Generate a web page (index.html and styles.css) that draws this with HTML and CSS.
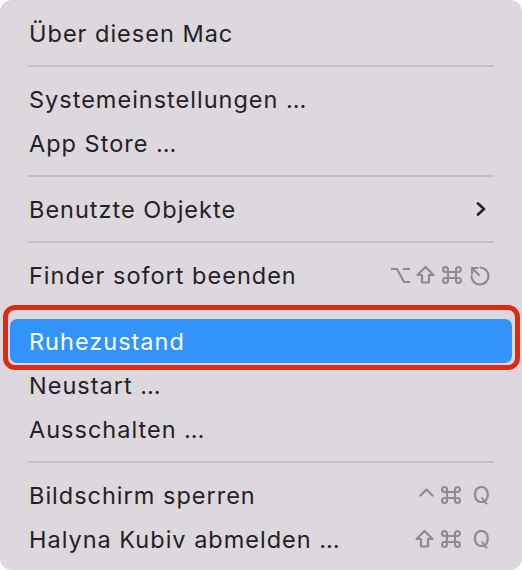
FILE: index.html
```html
<!DOCTYPE html>
<html lang="de">
<head>
<meta charset="utf-8">
<title>Apple-Menü</title>
<link rel="stylesheet" href="styles.css">
</head>
<body>
<div class="menu">
  <div class="item"><span class="label">Über diesen Mac</span></div>
  <div class="sep"></div>
  <div class="item"><span class="label">Systemeinstellungen …</span></div>
  <div class="item"><span class="label">App Store …</span></div>
  <div class="sep"></div>
  <div class="item">
    <span class="label">Benutzte Objekte</span>
    <svg class="chev" width="12" height="14" viewBox="0 0 12 14"><path d="M3 1.5 L9 7 L3 12.5" fill="none" stroke="#262226" stroke-width="2.6" stroke-linecap="round" stroke-linejoin="round"/></svg>
  </div>
  <div class="sep"></div>
  <div class="item">
    <span class="label">Finder sofort beenden</span>
    <span class="keys">
      <svg width="21" height="20" viewBox="0 0 21 20"><path d="M1 4 H7 L14 17 H20 M13 4 H20" fill="none" stroke="#8f8a90" stroke-width="2.2"/></svg>
      <svg width="19" height="20" viewBox="0 0 19 20"><path d="M9.5 2 L17.5 10 H13 V17.5 H6 V10 H1.5 Z" fill="none" stroke="#8f8a90" stroke-width="2.2" stroke-linejoin="round"/></svg>
      <svg width="24" height="20" viewBox="0 0 24 20"><path d="M8 7 V13 M16 7 V13 M8 7 H16 M8 13 H16 M8 7 H5.5 A2.5 2.5 0 1 1 8 4.5 V7 M16 7 V4.5 A2.5 2.5 0 1 1 18.5 7 H16 M8 13 V15.5 A2.5 2.5 0 1 1 5.5 13 H8 M16 13 H18.5 A2.5 2.5 0 1 1 16 15.5 V13" fill="none" stroke="#8f8a90" stroke-width="2.1"/></svg>
      <svg width="21" height="21" viewBox="0 0 21 21"><path d="M11.5 2.5 A8.5 8.5 0 1 1 2.5 11" fill="none" stroke="#8f8a90" stroke-width="2.2" stroke-linecap="round"/><path d="M3 3 L10 10 M3 3 H8.5 M3 3 V8.5" fill="none" stroke="#8f8a90" stroke-width="2.2" stroke-linecap="round" stroke-linejoin="round"/></svg>
    </span>
  </div>
  <div class="sep"></div>
  <div class="item active"><span class="label">Ruhezustand</span></div>
  <div class="item"><span class="label">Neustart …</span></div>
  <div class="item"><span class="label">Ausschalten …</span></div>
  <div class="sep"></div>
  <div class="item">
    <span class="label">Bildschirm sperren</span>
    <span class="keys">
      <svg width="15" height="20" viewBox="0 0 15 20"><path d="M1.5 10.5 L7.5 4.5 L13.5 10.5" fill="none" stroke="#8f8a90" stroke-width="2.2" stroke-linecap="round" stroke-linejoin="round"/></svg>
      <svg width="24" height="20" viewBox="0 0 24 20"><path d="M8 7 V13 M16 7 V13 M8 7 H16 M8 13 H16 M8 7 H5.5 A2.5 2.5 0 1 1 8 4.5 V7 M16 7 V4.5 A2.5 2.5 0 1 1 18.5 7 H16 M8 13 V15.5 A2.5 2.5 0 1 1 5.5 13 H8 M16 13 H18.5 A2.5 2.5 0 1 1 16 15.5 V13" fill="none" stroke="#8f8a90" stroke-width="2.1"/></svg>
      <span class="q">Q</span>
    </span>
  </div>
  <div class="item">
    <span class="label">Halyna Kubiv abmelden …</span>
    <span class="keys">
      <svg width="19" height="20" viewBox="0 0 19 20"><path d="M9.5 2 L17.5 10 H13 V17.5 H6 V10 H1.5 Z" fill="none" stroke="#8f8a90" stroke-width="2.2" stroke-linejoin="round"/></svg>
      <svg width="24" height="20" viewBox="0 0 24 20"><path d="M8 7 V13 M16 7 V13 M8 7 H16 M8 13 H16 M8 7 H5.5 A2.5 2.5 0 1 1 8 4.5 V7 M16 7 V4.5 A2.5 2.5 0 1 1 18.5 7 H16 M8 13 V15.5 A2.5 2.5 0 1 1 5.5 13 H8 M16 13 H18.5 A2.5 2.5 0 1 1 16 15.5 V13" fill="none" stroke="#8f8a90" stroke-width="2.1"/></svg>
      <span class="q">Q</span>
    </span>
  </div>
  <div class="callout"></div>
</div>
</body>
</html>
```
FILE: styles.css
```css
html, body {
  margin: 0;
  padding: 0;
  background: #ffffff;
}
.menu {
  position: relative;
  width: 522px;
  height: 570px;
  box-sizing: border-box;
  padding-top: 11px;
  background: #ddd7de;
  border-radius: 12px;
  font-family: Inter, "Noto Sans", "DejaVu Sans", sans-serif;
  color: #242124;
  overflow: hidden;
}
.item {
  height: 44px;
  margin: 0 10px;
  padding: 0 22px 0 19px;
  display: flex;
  align-items: center;
  justify-content: space-between;
  border-radius: 7px;
  font-size: 23.5px;
  letter-spacing: 1px;
}
.item.active {
  background: #3294fb;
  color: #ffffff;
}
.sep {
  height: 22px;
  margin: 0 28px;
  display: flex;
  align-items: center;
}
.sep::before {
  content: "";
  display: block;
  width: 100%;
  height: 2px;
  background: #c6bfc7;
}
.keys {
  display: flex;
  align-items: center;
  gap: 5px;
  color: #8f8a90;
  letter-spacing: 0;
}
.keys svg {
  display: block;
}
.q {
  font-size: 23px;
  margin-left: 4px;
  line-height: 20px;
}
.chev {
  display: block;
  margin-right: 3px;
}
.callout {
  position: absolute;
  left: 3px;
  top: 305px;
  width: 517px;
  height: 65px;
  box-sizing: border-box;
  border: 5px solid #dd2a10;
  border-radius: 12px;
}
```
